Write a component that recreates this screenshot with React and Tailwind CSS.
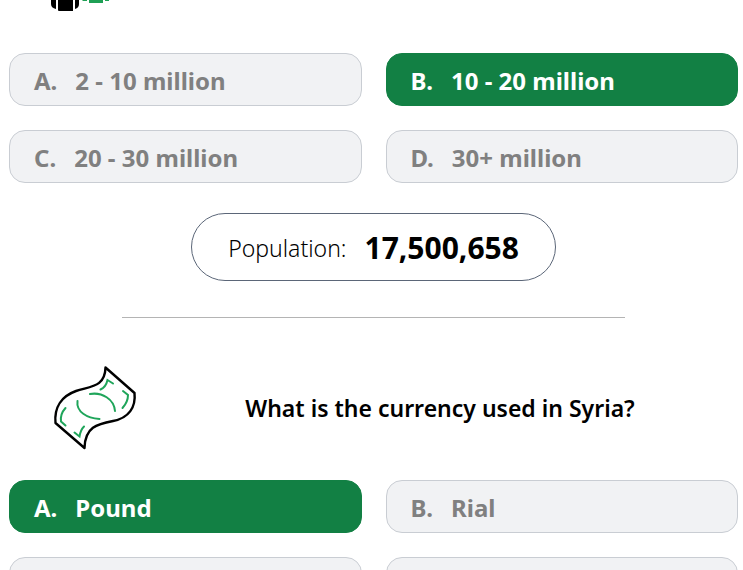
const QUESTIONS = {
  population: [
    { letter: "A", text: "2 - 10 million" },
    { letter: "B", text: "10 - 20 million", correct: true },
    { letter: "C", text: "20 - 30 million" },
    { letter: "D", text: "30+ million" },
  ],
  currency: [
    { letter: "A", text: "Pound", correct: true },
    { letter: "B", text: "Rial" },
    { letter: "C", text: "" },
    { letter: "D", text: "" },
  ],
};

function PeopleIcon() {
  return (
    <svg viewBox="0 0 60 11" className="block h-[11px] w-[60px]" aria-hidden="true">
      <path d="M2 0H7V9Q2 8 2 4Z" />
      <path d="M9 0H24V11H10Q9 11 9 10Z" />
      <path d="M26 0H30V4Q30 8 26 9Z" />
      <path d="M33 0H38V1H34ZM40 0H54V3H40ZM56 0H60V1H56Z" fill="#1fa055" />
    </svg>
  );
}

function BanknoteIcon() {
  return (
    <svg
      viewBox="40 355 110 105"
      className="block h-[105px] w-[110px]"
      fill="none"
      strokeWidth="2.4"
      strokeLinecap="round"
      aria-hidden="true"
    >
      <path
        d="M105.5 367.5L134.5 393C136 407 129 418 113 421C97 424 85 427 84.5 448L55.5 423C54 407 62 396 76 391C91 386 105 387 105.5 367.5Z"
        stroke="#000"
        strokeLinejoin="round"
      />
      <g stroke="#1fa55a" strokeWidth="2">
        <path d="M90 394C102 392 114 399 115 411" />
        <path d="M77.500 401C76 412 87 418 99.500 419" />
        <path d="M100.500 389.500Q106 387 107.500 380L113 383.500" />
        <path d="M123 391L128 395Q128 402 122.500 408" />
        <path d="M65.500 408Q60 414 61 421.500L65.500 425.500" />
        <path d="M74.500 432.500L79.500 436.500Q80.500 430 84 426.500" />
      </g>
    </svg>
  );
}

function Answers({ options }) {
  return (
    <div className="grid grid-cols-2 gap-6">
      {options.map(({ letter, text, correct }) => (
        <button
          key={letter}
          type="button"
          className={`flex h-[53px] items-center gap-[18px] rounded-2xl border px-6 pt-0.5 text-left text-2xl leading-none font-bold ${
            correct
              ? "border-[#128044] bg-[#128044] text-white"
              : "border-[#c9cdd3] bg-[#f1f2f4] text-[#808080]"
          }`}
        >
          <span>{letter}.</span>
          <span>{text}</span>
        </button>
      ))}
    </div>
  );
}

export default function App() {
  return (
    <main className="h-screen overflow-hidden bg-white pr-[5px] pl-[9px] font-['Noto_Sans','Open_Sans',sans-serif] text-black">
      <div className="mb-[42px] pl-10">
        <PeopleIcon />
      </div>

      <Answers options={QUESTIONS.population} />

      <div className="mx-auto mt-[30px] flex h-[68px] w-fit items-center gap-[18px] rounded-full border border-[#5b6678] px-9 pt-0.5">
        <span className="text-[23px] font-light">Population:</span>
        <span className="text-3xl font-bold">17,500,658</span>
      </div>

      <hr className="mx-auto mt-9 w-[69%] border-[#b4b4b4]" />

      <div className="mt-[37px] mb-5 flex items-center pl-[31px]">
        <BanknoteIcon />
        <h2 className="flex-1 pt-0.5 pl-1 pr-3 text-center text-[23px] font-semibold">
          What is the currency used in Syria?
        </h2>
      </div>

      <Answers options={QUESTIONS.currency} />
    </main>
  );
}
